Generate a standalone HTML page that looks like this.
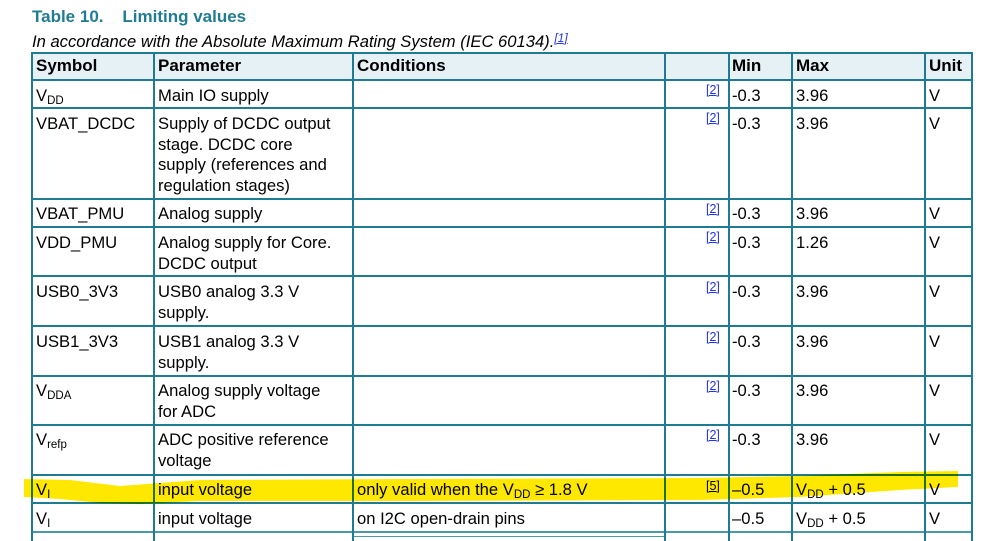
<!DOCTYPE html>
<html><head><meta charset="utf-8"><style>
html,body{margin:0;padding:0;background:#fff;width:999px;height:541px;overflow:hidden;position:relative;font-family:"Liberation Sans",Arial,sans-serif;color:#000}
.t{position:absolute;font-size:16.6px;line-height:20.5px;white-space:nowrap}
.h{position:absolute;background:#1e7b91}
.b{font-weight:bold}
sub{font-size:11.5px;vertical-align:-3px;line-height:0}
.r{position:absolute;font-size:12.5px;color:#2233ee;text-decoration:underline;line-height:13px}
</style></head><body>
<div class="t b" style="left:32px;top:7px;color:#1f7c93;font-size:17px">Table 10.&nbsp;&nbsp;&nbsp;&nbsp;Limiting values</div>
<div class="t" style="left:32px;top:28px;font-style:italic">In accordance with the Absolute Maximum Rating System (IEC 60134).<span style="font-size:12px;color:#2233ee;text-decoration:underline;vertical-align:5px">[1]</span></div>
<div style="position:absolute;left:31px;top:52px;width:941px;height:28px;background:#e5f1f4"></div>
<div class="h" style="left:31px;top:52px;width:942px;height:2px"></div>
<div class="h" style="left:31px;top:79px;width:942px;height:2px"></div>
<div class="h" style="left:31px;top:107px;width:942px;height:2px"></div>
<div class="h" style="left:31px;top:198px;width:942px;height:2px"></div>
<div class="h" style="left:31px;top:226px;width:942px;height:2px"></div>
<div class="h" style="left:31px;top:275px;width:942px;height:2px"></div>
<div class="h" style="left:31px;top:325px;width:942px;height:2px"></div>
<div class="h" style="left:31px;top:375px;width:942px;height:2px"></div>
<div class="h" style="left:31px;top:424px;width:942px;height:2px"></div>
<div class="h" style="left:31px;top:474px;width:942px;height:2px"></div>
<div class="h" style="left:31px;top:502px;width:942px;height:2px"></div>
<div class="h" style="left:31px;top:531px;width:942px;height:2px;background:#4a9aaa"></div>
<div class="h" style="left:353px;top:536px;width:311px;height:1px;background:#4a9aaa"></div>
<div class="h" style="left:31px;top:52px;width:2px;height:489px"></div>
<div class="h" style="left:153px;top:52px;width:2px;height:489px"></div>
<div class="h" style="left:352px;top:52px;width:2px;height:489px"></div>
<div class="h" style="left:664px;top:52px;width:2px;height:489px"></div>
<div class="h" style="left:728px;top:52px;width:2px;height:489px"></div>
<div class="h" style="left:791px;top:52px;width:2px;height:489px"></div>
<div class="h" style="left:924px;top:52px;width:2px;height:489px"></div>
<div class="h" style="left:971px;top:52px;width:2px;height:489px"></div>
<div class="t b" style="left:36px;top:56px;font-size:17px">Symbol</div>
<div class="t b" style="left:158px;top:56px;font-size:17px">Parameter</div>
<div class="t b" style="left:357px;top:56px;font-size:17px">Conditions</div>
<div class="t b" style="left:732px;top:56px;font-size:17px">Min</div>
<div class="t b" style="left:796px;top:56px;font-size:17px">Max</div>
<div class="t b" style="left:929px;top:56px;font-size:17px">Unit</div>
<div class="t" style="left:36px;top:86px">V<sub>DD</sub></div>
<div class="t" style="left:158px;top:86px">Main IO supply</div>
<div class="t" style="left:36px;top:114px">VBAT_DCDC</div>
<div class="t" style="left:158px;top:114px">Supply of DCDC output<br>stage. DCDC core<br>supply (references and<br>regulation stages)</div>
<div class="t" style="left:36px;top:204px">VBAT_PMU</div>
<div class="t" style="left:158px;top:204px">Analog supply</div>
<div class="t" style="left:36px;top:233px">VDD_PMU</div>
<div class="t" style="left:158px;top:233px">Analog supply for Core.<br>DCDC output</div>
<div class="t" style="left:36px;top:282px">USB0_3V3</div>
<div class="t" style="left:158px;top:282px">USB0 analog 3.3 V<br>supply.</div>
<div class="t" style="left:36px;top:332px">USB1_3V3</div>
<div class="t" style="left:158px;top:332px">USB1 analog 3.3 V<br>supply.</div>
<div class="t" style="left:36px;top:381px">V<sub>DDA</sub></div>
<div class="t" style="left:158px;top:381px">Analog supply voltage<br>for ADC</div>
<div class="t" style="left:36px;top:430px">V<sub>refp</sub></div>
<div class="t" style="left:158px;top:430px">ADC positive reference<br>voltage</div>
<div class="t" style="left:36px;top:480px">V<sub>I</sub></div>
<div class="t" style="left:158px;top:480px">input voltage</div>
<div class="t" style="left:357px;top:480px">only valid when the V<sub>DD</sub> ≥ 1.8 V</div>
<div class="t" style="left:36px;top:509px">V<sub>I</sub></div>
<div class="t" style="left:158px;top:509px">input voltage</div>
<div class="t" style="left:357px;top:509px">on I2C open-drain pins</div>
<div class="r" style="left:706px;top:84px">[2]</div>
<div class="r" style="left:706px;top:112px">[2]</div>
<div class="r" style="left:706px;top:203px">[2]</div>
<div class="r" style="left:706px;top:231px">[2]</div>
<div class="r" style="left:706px;top:281px">[2]</div>
<div class="r" style="left:706px;top:331px">[2]</div>
<div class="r" style="left:706px;top:380px">[2]</div>
<div class="r" style="left:706px;top:429px">[2]</div>
<div class="r" style="left:706px;top:480px;color:#000">[5]</div>
<div class="t" style="left:732px;top:86px">-0.3</div><div class="t" style="left:796px;top:86px">3.96</div><div class="t" style="left:929px;top:86px">V</div>
<div class="t" style="left:732px;top:114px">-0.3</div><div class="t" style="left:796px;top:114px">3.96</div><div class="t" style="left:929px;top:114px">V</div>
<div class="t" style="left:732px;top:204px">-0.3</div><div class="t" style="left:796px;top:204px">3.96</div><div class="t" style="left:929px;top:204px">V</div>
<div class="t" style="left:732px;top:233px">-0.3</div><div class="t" style="left:796px;top:233px">1.26</div><div class="t" style="left:929px;top:233px">V</div>
<div class="t" style="left:732px;top:282px">-0.3</div><div class="t" style="left:796px;top:282px">3.96</div><div class="t" style="left:929px;top:282px">V</div>
<div class="t" style="left:732px;top:332px">-0.3</div><div class="t" style="left:796px;top:332px">3.96</div><div class="t" style="left:929px;top:332px">V</div>
<div class="t" style="left:732px;top:381px">-0.3</div><div class="t" style="left:796px;top:381px">3.96</div><div class="t" style="left:929px;top:381px">V</div>
<div class="t" style="left:732px;top:430px">-0.3</div><div class="t" style="left:796px;top:430px">3.96</div><div class="t" style="left:929px;top:430px">V</div>
<div class="t" style="left:732px;top:480px">–0.5</div><div class="t" style="left:796px;top:480px">V<sub>DD</sub> + 0.5</div><div class="t" style="left:929px;top:480px">V</div>
<div class="t" style="left:732px;top:509px">–0.5</div><div class="t" style="left:796px;top:509px">V<sub>DD</sub> + 0.5</div><div class="t" style="left:929px;top:509px">V</div>
<div class="t" style="left:357px;top:538px">USB_DM</div>
<div class="t" style="left:732px;top:538px">-0.3</div><div class="t" style="left:796px;top:538px">USB_3V3 + 0.5</div><div class="t" style="left:929px;top:538px">V</div>
<svg style="position:absolute;left:0;top:0;mix-blend-mode:multiply" width="999" height="541">
<path d="M24 479 L70 480 L120 486 L200 480 L400 479 L700 478 L800 476 L900 472 L958 471 L958 487 L900 490 L800 497 L700 500 L400 501 L200 501 L140 504 L100 503 L60 499 L24 497 Z" fill="#ffe800"/>
</svg>
</body></html>
